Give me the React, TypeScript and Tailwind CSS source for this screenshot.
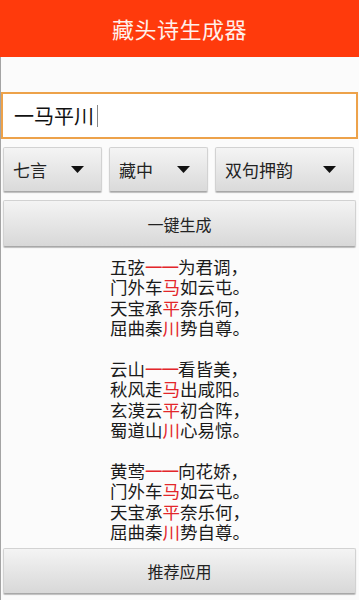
import React from 'react';

const stanzas: [string, string, string][][] = [
  [
    ['五弦', '一一', '为君调，'],
    ['门外车', '马', '如云屯。'],
    ['天宝承', '平', '奈乐何，'],
    ['屈曲秦', '川', '势自尊。'],
  ],
  [
    ['云山', '一一', '看皆美，'],
    ['秋风走', '马', '出咸阳。'],
    ['玄漠云', '平', '初合阵，'],
    ['蜀道山', '川', '心易惊。'],
  ],
  [
    ['黄莺', '一一', '向花娇，'],
    ['门外车', '马', '如云屯。'],
    ['天宝承', '平', '奈乐何，'],
    ['屈曲秦', '川', '势自尊。'],
  ],
];

const Caret = () => (
  <svg width="13" height="7" viewBox="0 0 13 7" className="shrink-0">
    <path d="M0 0 L13 0 L6.5 7 Z" fill="#111" />
  </svg>
);

const Dropdown = ({ label, className }: { label: string; className: string }) => (
  <div
    className={`${className} h-[45px] flex items-center justify-between pl-[9px] pr-[17px] rounded-[2px] border border-[#d2d2d2] border-b-[#a8a8a8] bg-gradient-to-b from-[#f4f4f4] to-[#dadada] shadow-[0_1px_1px_rgba(0,0,0,0.25)]`}
  >
    <span className="text-[17px] text-[#222]">{label}</span>
    <Caret />
  </div>
);

const GrayButton = ({ label, className }: { label: string; className: string }) => (
  <div
    className={`${className} mx-[3px] flex items-center justify-center rounded-[2px] border border-[#d2d2d2] border-b-[#a8a8a8] bg-gradient-to-b from-[#f4f4f4] to-[#d8d8d8] shadow-[0_1px_1px_rgba(0,0,0,0.25)] text-[16px] text-[#222]`}
  >
    {label}
  </div>
);

export default function App() {
  return (
    <div
      className="w-[359px] h-[600px] flex flex-col bg-[#fbfbfb] overflow-hidden"
      style={{ fontFamily: '"Noto Sans CJK SC", "Noto Sans", sans-serif' }}
    >
      <div className="h-[57px] shrink-0 bg-[#ff3a0c] flex items-center justify-center">
        <span className="text-[22px] text-[#fff0ea] tracking-[0.5px]">藏头诗生成器</span>
      </div>

      <div className="flex-1 flex flex-col border-l border-[#a4a4a4]">
        <div className="h-[35px] shrink-0" />

        <div className="h-[47px] shrink-0 mr-[1px] border-2 border-[#eda24a] bg-white flex items-center pl-[11px]">
          <span className="text-[20px] text-[#111]">一马平川</span>
          <span className="ml-[3px] w-px h-[22px] bg-[#888]" />
        </div>

        <div className="mt-[8px] flex gap-[7px] px-[2px] mr-[3px]">
          <Dropdown label="七言" className="w-[99px]" />
          <Dropdown label="藏中" className="w-[99px]" />
          <Dropdown label="双句押韵" className="flex-1" />
        </div>

        <GrayButton label="一键生成" className="mt-[8px] h-[47px] ml-[2px]" />

        <div className="flex-1 flex flex-col items-center pt-[10px]">
          <div className="flex flex-col gap-[20.4px]">
            {stanzas.map((s, i) => (
              <div key={i} className="flex flex-col">
                {s.map(([a, h, b], j) => (
                  <div key={j} className="text-[17.5px] leading-[20.4px] text-[#1a1a1a] whitespace-nowrap">
                    {a}
                    <span className={h.length > 1 ? 'text-[#e3262a] tracking-[-1px]' : 'text-[#e3262a]'}>{h}</span>
                    {b}
                  </div>
                ))}
              </div>
            ))}
          </div>
        </div>

        <GrayButton label="推荐应用" className="h-[46px] mb-[6px] ml-[2px]" />
      </div>
    </div>
  );
}
